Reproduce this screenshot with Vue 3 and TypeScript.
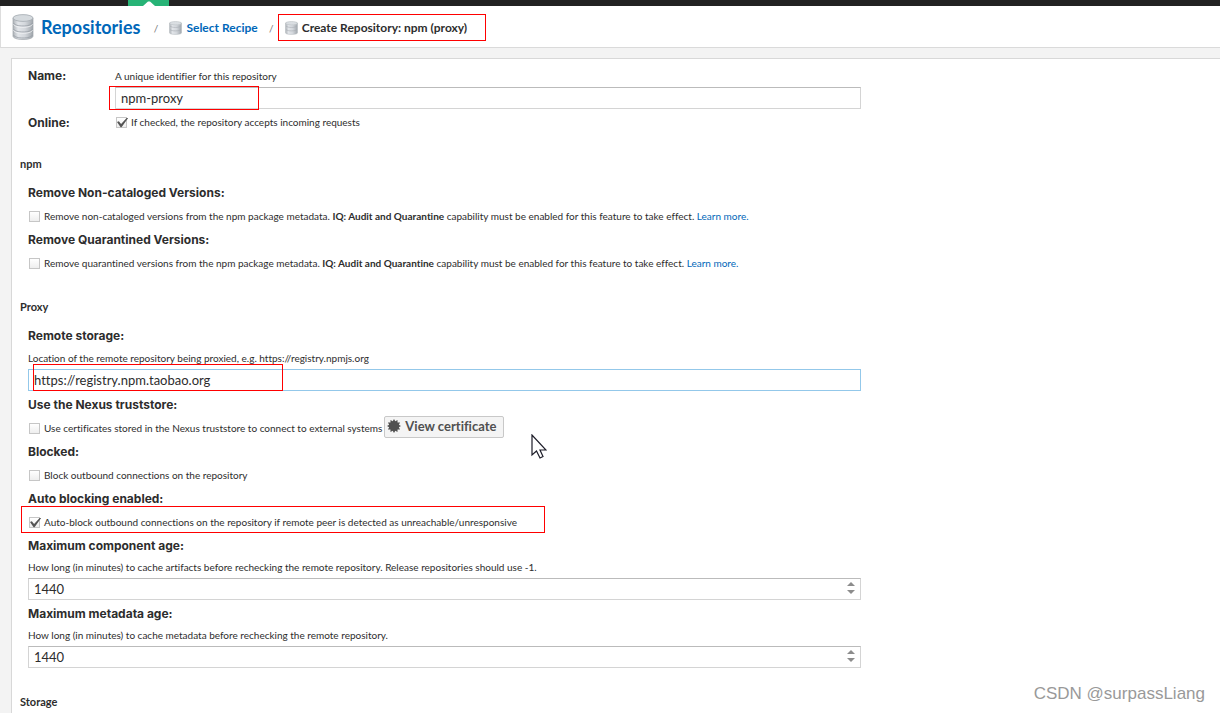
<script setup lang="ts">
import { reactive } from 'vue'

interface NpmOption {
  id: 'nonCataloged' | 'quarantined'
  label: string
  text: string
}

interface AgeOption {
  id: 'componentAge' | 'metadataAge'
  label: string
  help: string
}

const form = reactive({
  name: 'npm-proxy',
  online: true,
  nonCataloged: false,
  quarantined: false,
  remoteUrl: 'https://registry.npm.taobao.org',
  truststore: false,
  blocked: false,
  autoBlock: true,
  componentAge: 1440,
  metadataAge: 1440,
})

const npmOptions: NpmOption[] = [
  {
    id: 'nonCataloged',
    label: 'Remove Non-cataloged Versions:',
    text: 'Remove non-cataloged versions from the npm package metadata.',
  },
  {
    id: 'quarantined',
    label: 'Remove Quarantined Versions:',
    text: 'Remove quarantined versions from the npm package metadata.',
  },
]

const ageOptions: AgeOption[] = [
  {
    id: 'componentAge',
    label: 'Maximum component age:',
    help: 'How long (in minutes) to cache artifacts before rechecking the remote repository. Release repositories should use -1.',
  },
  {
    id: 'metadataAge',
    label: 'Maximum metadata age:',
    help: 'How long (in minutes) to cache metadata before rechecking the remote repository.',
  },
]

// Twelve-pointed seal outline for the certificate button
const sealPoints = Array.from({ length: 24 }, (_, i) => {
  const radius = i % 2 === 0 ? 7 : 5
  const angle = (i * Math.PI) / 12
  return `${(7 + radius * Math.sin(angle)).toFixed(2)},${(7 - radius * Math.cos(angle)).toFixed(2)}`
}).join(' ')
</script>

<template>
  <div class="page">
    <svg class="defs" width="0" height="0" aria-hidden="true">
      <defs>
        <linearGradient id="metal" x1="0" x2="1" y1="0" y2="0">
          <stop offset="0" stop-color="#adb2b7" />
          <stop offset="0.25" stop-color="#e2e5e9" />
          <stop offset="0.6" stop-color="#d3d7dc" />
          <stop offset="1" stop-color="#a0a6ac" />
        </linearGradient>
        <symbol id="database" viewBox="0 0 22 26">
          <path d="M1 4v18c0 2 4 3.500 10 3.500s10-1.500 10-3.500V4z" fill="url(#metal)" stroke="#9fa5ab" stroke-width=".7" />
          <path d="M1.500 9c1 2 5 3 9.500 3s8.500-1 9.500-3M1.500 15c1 2 5 3 9.500 3s8.500-1 9.500-3M1.500 21c1 2 5 3 9.500 3s8.500-1 9.500-3" fill="none" stroke="#979da4" stroke-width=".8" />
          <path d="M1.500 10.300c1 2 5 3 9.500 3s8.500-1 9.500-3M1.500 16.300c1 2 5 3 9.500 3s8.500-1 9.500-3" fill="none" stroke="#f2f4f6" stroke-width=".8" />
          <ellipse cx="11" cy="4" rx="10" ry="3.400" fill="#d5dade" stroke="#a5abb1" stroke-width=".8" />
        </symbol>
        <symbol id="database-small" viewBox="0 0 13 14">
          <path d="M.5 2v9.800c0 1 2.500 1.700 6 1.700s6-.7 6-1.700V2z" fill="url(#metal)" stroke="#b3b8bd" stroke-width=".5" />
          <path d="M1 5c1 1 3 1.400 5.500 1.400S11 6 12 5M1 8.500c1 1 3 1.400 5.500 1.400S11 9.500 12 8.500" fill="none" stroke="#a4aab0" stroke-width=".6" />
          <ellipse cx="6.500" cy="2.200" rx="6" ry="1.700" fill="#dadee2" stroke="#b3b8bd" stroke-width=".5" />
        </symbol>
      </defs>
    </svg>

    <div class="topbar">
      <div class="tab">
        <svg width="12" height="5" viewBox="0 0 12 5" aria-hidden="true"><path d="M0 5 5 .5h2L12 5z" fill="#fff" /></svg>
      </div>
    </div>

    <header class="header">
      <nav class="crumbs" aria-label="Breadcrumb">
        <a class="crumb root" href="#repositories">
          <svg width="22" height="26" aria-hidden="true"><use href="#database" /></svg>
          <span>Repositories</span>
        </a>
        <span class="slash">/</span>
        <a class="crumb" href="#recipe">
          <svg width="13" height="14" aria-hidden="true"><use href="#database-small" /></svg>
          <span>Select Recipe</span>
        </a>
        <span class="slash">/</span>
        <span class="crumb current">
          <svg width="13" height="14" aria-hidden="true"><use href="#database-small" /></svg>
          <span>Create Repository: npm (proxy)</span>
          <span class="mark mark-crumb"></span>
        </span>
      </nav>
    </header>

    <main class="panel">
      <form class="form" @submit.prevent>
        <div class="identity">
          <label class="label name-label" for="name">Name:</label>
          <div>
            <p id="name-help" class="help">A unique identifier for this repository</p>
            <div class="control">
              <input id="name" v-model="form.name" class="text" type="text" aria-describedby="name-help" />
              <span class="mark mark-name"></span>
            </div>
          </div>
          <span class="label">Online:</span>
          <div class="check">
            <input id="online" v-model="form.online" class="box" type="checkbox" />
            <label for="online">If checked, the repository accepts incoming requests</label>
          </div>
        </div>

        <h2 class="legend">npm</h2>
        <div v-for="option in npmOptions" :key="option.id" class="field">
          <div class="label">{{ option.label }}</div>
          <div class="check">
            <input :id="option.id" v-model="form[option.id]" class="box" type="checkbox" />
            <label :for="option.id">
              {{ option.text }} <b>IQ: Audit and Quarantine</b> capability must be enabled for this feature to take effect.
              <a class="link" href="#learn">Learn more.</a>
            </label>
          </div>
        </div>

        <h2 class="legend">Proxy</h2>
        <div class="field">
          <label class="label" for="remote">Remote storage:</label>
          <p id="remote-help" class="help roomy">Location of the remote repository being proxied, e.g. https://registry.npmjs.org</p>
          <div class="control">
            <input id="remote" v-model="form.remoteUrl" class="text focused" type="text" aria-describedby="remote-help" />
            <span class="mark mark-remote"></span>
          </div>
        </div>
        <div class="field">
          <div class="label">Use the Nexus truststore:</div>
          <div class="check">
            <input id="truststore" v-model="form.truststore" class="box" type="checkbox" />
            <label for="truststore">Use certificates stored in the Nexus truststore to connect to external systems</label>
            <button class="certificate" type="button">
              <svg width="14" height="14" viewBox="0 0 14 14" aria-hidden="true"><polygon :points="sealPoints" fill="#505050" /></svg>
              <span>View certificate</span>
            </button>
            <svg class="pointer" width="16" height="25" viewBox="0 0 16 25" aria-hidden="true">
              <path d="M1 1v20l4.500-4 3.500 7 3-1.500L9 16h6z" fill="#fff" stroke="#1c1c28" stroke-width="1.200" />
            </svg>
          </div>
        </div>
        <div class="field">
          <div class="label">Blocked:</div>
          <div class="check">
            <input id="blocked" v-model="form.blocked" class="box" type="checkbox" />
            <label for="blocked">Block outbound connections on the repository</label>
          </div>
        </div>
        <div class="field">
          <div class="label">Auto blocking enabled:</div>
          <div class="check">
            <input id="auto-block" v-model="form.autoBlock" class="box" type="checkbox" />
            <label for="auto-block">Auto-block outbound connections on the repository if remote peer is detected as unreachable/unresponsive</label>
            <span class="mark mark-auto"></span>
          </div>
        </div>
        <div v-for="option in ageOptions" :key="option.id" class="field">
          <label class="label" :for="option.id">{{ option.label }}</label>
          <p class="help">{{ option.help }}</p>
          <div class="control">
            <input :id="option.id" v-model.number="form[option.id]" class="text" type="number" />
            <div class="spinner">
              <button type="button" aria-label="Increase" @click="form[option.id]++">
                <svg width="8" height="5" viewBox="0 0 8 5" aria-hidden="true"><path d="M4 0 8 4H0z" fill="#8c8c8c" /></svg>
              </button>
              <button type="button" aria-label="Decrease" @click="form[option.id]--">
                <svg width="8" height="5" viewBox="0 0 8 5" aria-hidden="true"><path d="M4 5 8 1H0z" fill="#8c8c8c" /></svg>
              </button>
            </div>
          </div>
        </div>

        <h2 class="legend">Storage</h2>
      </form>
    </main>

    <div class="watermark">CSDN @surpassLiang</div>
  </div>
</template>

<style>
body {
  margin: 0;
  overflow: hidden;
}
</style>

<style scoped>
.page {
  position: relative;
  box-sizing: border-box;
  display: flex;
  flex-direction: column;
  height: 100vh;
  overflow: hidden;
  background: #f3f3f3;
  color: #2d2d2d;
  font: 10px/20px Lato, "Open Sans", sans-serif;
  font-variant-ligatures: none;
}
.defs {
  position: absolute;
}
.topbar {
  flex: none;
  height: 6px;
  padding-left: 128px;
  background: #222;
}
.tab {
  display: flex;
  align-items: flex-end;
  justify-content: center;
  width: 41px;
  height: 6px;
  background: #27b376;
}
.header {
  flex: none;
  height: 41px;
  border-bottom: 1px solid #dadada;
  border-left: 1px solid #ddd;
  background: #fff;
}
.crumbs {
  display: flex;
  align-items: center;
  height: 41px;
  padding-left: 11px;
}
.crumb {
  position: relative;
  display: flex;
  align-items: center;
  gap: 4px;
  padding-top: 2px;
  color: #0067b9;
  font-size: 12px;
  font-weight: 700;
  text-decoration: none;
  white-space: nowrap;
}
.crumb svg {
  flex: none;
}
.crumb.root {
  gap: 7px;
  padding: 0 2px 0 0;
  font-size: 18px;
}
.crumb.current {
  color: #2d2d2d;
}
.slash {
  width: 27px;
  padding-top: 2px;
  color: #777;
  text-align: center;
}
.panel {
  flex: 1;
  min-height: 0;
  overflow: hidden;
  margin: 10px 0 0 11px;
  border: 1px solid #d8d8d8;
  border-width: 1px 0 0 1px;
  background: #fff;
}
.form {
  display: flex;
  flex-direction: column;
  max-width: 833px;
  padding: 8px 16px 0;
}
.identity {
  display: grid;
  grid-template-columns: 87px 1fr;
  row-gap: 2px;
  margin-bottom: 17px;
}
.label {
  display: block;
  font-family: Inter, "Open Sans", sans-serif;
  font-size: 12px;
  font-weight: 700;
  line-height: 24px;
}
.label.name-label {
  line-height: 18px;
}
.help {
  margin: 0;
  padding-bottom: 2px;
  line-height: 18px;
}
.help.roomy {
  padding-top: 1px;
}
.field:has(.help) {
  margin-bottom: 2px;
}
.control,
.check {
  position: relative;
}
.text {
  display: block;
  box-sizing: border-box;
  width: 100%;
  height: 22px;
  padding: 0 5px 1px;
  border: 1px solid #d4d4d4;
  border-top-color: #bbb;
  border-radius: 0;
  outline: none;
  background: #fff;
  color: #2d2d2d;
  font: 13px/18px Lato, "Open Sans", sans-serif;
  font-variant-ligatures: none;
  appearance: textfield;
}
.text::-webkit-inner-spin-button {
  appearance: none;
}
.text.focused {
  border-color: #93c8ea;
}
.check {
  display: flex;
  align-items: center;
  height: 22px;
  margin-bottom: 1px;
  white-space: nowrap;
}
.box {
  flex: none;
  box-sizing: border-box;
  width: 11px;
  height: 11px;
  margin: 0 4px 0 1px;
  border: 1px solid #c6c6c6;
  background: linear-gradient(#fff, #eee);
  appearance: none;
}
.box:checked::after {
  content: "";
  display: block;
  width: 12px;
  height: 10px;
  background: #555;
  clip-path: polygon(0 45%, 15% 38%, 34% 66%, 84% 0, 96% 0, 38% 98%, 30% 98%);
}
.link {
  color: #0067b9;
  text-decoration: none;
}
.legend {
  margin: 20px -8px 5px;
  font-size: 11px;
  font-weight: 700;
  line-height: 24px;
}
.identity + .legend {
  margin-top: 0;
}
.certificate {
  display: flex;
  align-items: center;
  gap: 4px;
  box-sizing: border-box;
  height: 22px;
  margin: 0 0 3px 2px;
  padding: 0 7px 1px 2px;
  border: 1px solid #c8c8c8;
  border-radius: 2px;
  background: #f4f4f4;
  color: #505050;
  font: 700 13px/18px Lato, "Open Sans", sans-serif;
  font-variant-ligatures: none;
}
.pointer {
  position: absolute;
  top: 17px;
  left: 503px;
}
.spinner {
  position: absolute;
  top: 4px;
  right: 6px;
  display: grid;
  gap: 2px;
}
.spinner button {
  display: flex;
  padding: 0;
  border: 0;
  background: none;
}
.mark {
  position: absolute;
  box-sizing: border-box;
  border: 1px solid #f00;
  pointer-events: none;
}
.mark-crumb {
  top: -2px;
  left: -7px;
  width: 208px;
  height: 27px;
}
.mark-name {
  top: -1px;
  left: -6px;
  width: 150px;
  height: 24px;
}
.mark-remote {
  top: -5px;
  left: 5px;
  width: 250px;
  height: 27px;
}
.mark-auto {
  top: -5px;
  left: -7px;
  width: 524px;
  height: 27px;
}
.watermark {
  position: absolute;
  right: 15px;
  bottom: 8px;
  color: #999;
  font: 17px/22px "Liberation Sans", Arial, sans-serif;
}
</style>
